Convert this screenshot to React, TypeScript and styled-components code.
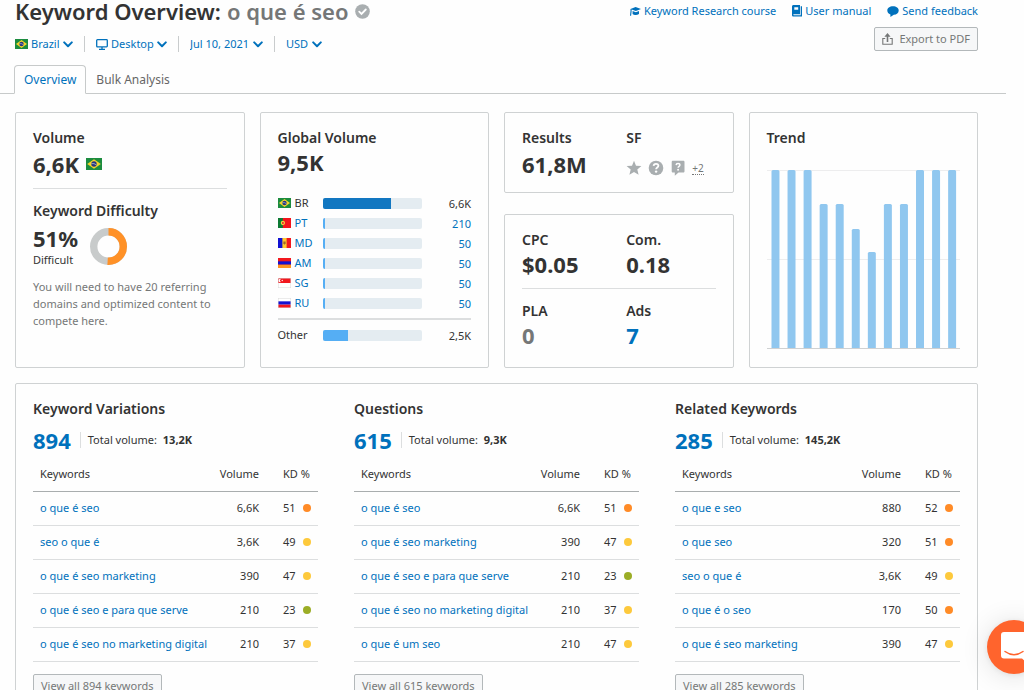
import React from "react";
import styled, { createGlobalStyle } from "styled-components";

const color = {
  text: "#333333",
  muted: "#757777",
  link: "#0071bc",
  border: "#cfd2d3",
  line: "#dcdedf",
  icon: "#a9aeb0",
};

const GlobalStyle = createGlobalStyle`
  *, *::before, *::after { box-sizing: border-box; }
  body {
    margin: 0;
    background: #fefefe;
    color: ${color.text};
    font-family: "Noto Sans", "Open Sans", sans-serif;
    font-size: 11px;
    line-height: 16px;
    overflow-x: hidden;
  }
  h1, h2, p { margin: 0; padding: 0; }
  button, select { font: inherit; }
  a { color: ${color.link}; text-decoration: none; }
  svg { display: block; flex: none; }
`;

const Page = styled.div`
  padding: 0 46px 24px 15px;
`;

const Header = styled.header`
  display: flex;
  justify-content: space-between;
  align-items: flex-start;
`;

const Title = styled.h1`
  display: flex;
  align-items: center;
  gap: 6px;
  font-size: 22px;
  line-height: 22px;
  font-weight: 600;
  white-space: nowrap;
`;

const Query = styled.span`
  color: ${color.muted};
`;

const Filters = styled.div`
  display: flex;
  align-items: center;
  margin-top: 14px;
`;

const Filter = styled.label`
  display: flex;
  align-items: center;
  gap: 3px;
  color: ${color.link};
  & + & {
    margin-left: 11px;
    padding-left: 11px;
    border-left: 1px solid #c9cccd;
  }
`;

const FilterSelect = styled.select`
  appearance: none;
  border: 0;
  margin: 0 -14px 0 0;
  padding: 0 14px 0 0;
  background: transparent;
  color: inherit;
  line-height: 16px;
  cursor: pointer;
`;

const Aside = styled.div`
  display: flex;
  flex-direction: column;
  align-items: flex-end;
  gap: 8px;
  padding-top: 3px;
`;

const HelpLinks = styled.nav`
  display: flex;
  gap: 16px;
`;

const HelpLink = styled.a`
  display: flex;
  align-items: center;
  gap: 3px;
`;

const Button = styled.button`
  display: inline-flex;
  align-items: center;
  gap: 6px;
  height: 24px;
  padding: 0 7px;
  border: 1px solid #b3b8ba;
  border-radius: 2px;
  background: #f6f7f8;
  color: ${color.muted};
  white-space: nowrap;
`;

const Tabs = styled.div`
  display: flex;
  height: 29px;
  margin: 13px -28px 0 -15px;
  padding-left: 14px;
  border-bottom: 1px solid #c7caca;
`;

const Tab = styled.button<{ $active?: boolean }>`
  margin: 0 0 -1px;
  padding: 0 9px;
  border: 1px solid ${(p) => (p.$active ? "#c7caca" : "transparent")};
  border-bottom-color: ${(p) => (p.$active ? "#fefefe" : "transparent")};
  border-radius: 4px 4px 0 0;
  background: ${(p) => (p.$active ? "#fefefe" : "transparent")};
  color: ${(p) => (p.$active ? color.link : "#666666")};
  font-size: 12px;
`;

const Metrics = styled.main`
  display: grid;
  grid-template-columns: repeat(4, minmax(0, 1fr));
  gap: 15px;
  margin-top: 18px;
`;

const Card = styled.section<{ $compact?: boolean }>`
  border: 1px solid ${color.border};
  border-radius: 2px;
  padding: 15px 17px ${(p) => (p.$compact ? 14 : 17)}px;
`;

const Stack = styled.div`
  display: flex;
  flex-direction: column;
  gap: 21px;
  & > :last-child { flex: 1; }
`;

const CardTitle = styled.h2`
  font-size: 14px;
  line-height: 20px;
  font-weight: 600;
  white-space: nowrap;
`;

const Figure = styled.div<{ $tone?: string; $loose?: boolean }>`
  display: flex;
  align-items: center;
  gap: 7px;
  margin-top: ${(p) => (p.$loose ? 3 : 1)}px;
  font-size: 22px;
  line-height: 26px;
  font-weight: 700;
  color: ${(p) => p.$tone || "inherit"};
`;

const Rule = styled.hr`
  margin: 11px 0 12px;
  border: 0;
  border-top: 1px solid ${color.line};
`;

const Difficulty = styled.div`
  display: flex;
  align-items: center;
  gap: 12px;
  margin-top: 3px;
`;

const Percent = styled.div`
  font-size: 22px;
  line-height: 28px;
  font-weight: 700;
`;

const Hint = styled.p`
  margin-top: 10px;
  color: ${color.muted};
  line-height: 17px;
`;

const Countries = styled.div`
  margin-top: 18px;
`;

const CountryRow = styled.div<{ $total?: boolean }>`
  display: grid;
  grid-template-columns: 45px 1fr 49px;
  align-items: center;
  height: 20px;
  ${(p) => p.$total && `height: 32px; margin-top: 5px; border-top: 2px solid ${color.line};`}
`;

const Country = styled.span`
  display: flex;
  align-items: center;
  gap: 4px;
`;

const Track = styled.div`
  height: 11px;
  border-radius: 2px;
  background: #e4ecf1;
  overflow: hidden;
`;

const Fill = styled.div<{ $strong?: boolean }>`
  height: 100%;
  background: ${(p) => (p.$strong ? "#1277c1" : "#55aef4")};
`;

const Amount = styled.span`
  padding-top: 1px;
  text-align: right;
`;

const Pair = styled.div`
  display: grid;
  grid-template-columns: 7fr 6fr;
`;

const Features = styled.div`
  display: flex;
  align-items: center;
  gap: 6px;
  height: 20px;
  margin-top: 10px;
  color: ${color.icon};
`;

const More = styled.a`
  border-bottom: 1px dotted ${color.muted};
  color: ${color.muted};
  font-size: 10px;
  line-height: 12px;
`;

const Chart = styled.svg`
  width: 100%;
  height: 180px;
  margin-top: 22px;
`;

const Ideas = styled.section`
  display: grid;
  grid-template-columns: repeat(3, minmax(0, 1fr));
  gap: 36px;
  margin-top: 15px;
  padding: 15px 17px 17px;
  border: 1px solid ${color.border};
  border-radius: 2px;
`;

const Summary = styled.div`
  display: flex;
  align-items: center;
  margin-top: 8px;
`;

const Count = styled.a`
  font-size: 22px;
  line-height: 26px;
  font-weight: 700;
`;

const Total = styled.span`
  margin-left: 9px;
  padding-left: 7px;
  border-left: 1px solid ${color.line};
  white-space: nowrap;
  b { margin-left: 3px; }
`;

const Table = styled.table`
  width: 100%;
  margin: 5px 0 12px;
  border-collapse: collapse;
  table-layout: fixed;
  th, td {
    height: 34px;
    padding: 0 0 0 7px;
    font-weight: 400;
    text-align: left;
    white-space: nowrap;
    border-bottom: 1px solid ${color.line};
  }
  th { height: 33px; border-bottom-color: #a9adae; }
  th:nth-child(2), td:nth-child(2) { width: 50px; padding: 0; text-align: right; }
  th:nth-child(3), td:nth-child(3) { width: 59px; padding-left: 24px; }
`;

const Score = styled.span<{ $dot: string }>`
  display: flex;
  align-items: center;
  gap: 7px;
  &::after {
    content: "";
    width: 8px;
    height: 8px;
    border-radius: 50%;
    background: ${(p) => p.$dot};
  }
`;

const ChatButton = styled.button`
  position: fixed;
  right: -17px;
  bottom: 16px;
  width: 54px;
  height: 54px;
  padding: 0;
  border: 0;
  border-radius: 50%;
  background: #ff642d;
  box-shadow: 0 1px 6px rgba(0, 0, 0, 0.08), 0 2px 28px rgba(0, 0, 0, 0.12);
`;

const Chevron = () => (
  <svg width="10" height="7" viewBox="0 0 10 7" fill="none" stroke="currentColor" strokeWidth="2" strokeLinecap="round" strokeLinejoin="round" pointerEvents="none">
    <path d="M1.2 1.4 5 5.2l3.8-3.8" />
  </svg>
);

const Verified = () => (
  <svg width="15" height="15" viewBox="0 0 15 15">
    <circle cx="7.5" cy="7.5" r="7.3" fill="#a9aeb0" />
    <path d="m4.2 7.6 2.3 2.3 4.3-4.4" fill="none" stroke="#fff" strokeWidth="1.8" strokeLinecap="round" />
  </svg>
);

const Monitor = () => (
  <svg width="12" height="11" viewBox="0 0 12 11" fill="none" stroke="currentColor">
    <rect x="0.7" y="0.7" width="10.6" height="7.2" rx="0.8" strokeWidth="1.3" />
    <path d="M6 8v2M3 10.3h6" strokeWidth="1.3" />
  </svg>
);

const Cap = () => (
  <svg width="11" height="11" viewBox="0 0 11 11" fill="currentColor">
    <path d="M5.6 1 11 2.9 5.9 5 1.6 3.6v1.6L1.1 9.8H0l.5-4.7V3z" />
    <path d="M2.6 5.1 5.9 6.2 9 5v3.1c-1 .7-2.2 1-3.2 1-1.2 0-2.4-.3-3.2-1z" />
  </svg>
);

const Book = () => (
  <svg width="10" height="12" viewBox="0 0 10 12" fill="currentColor">
    <path fillRule="evenodd" d="M1.5 0H8v9.200H1.800c-.7 0-.7 1 0 1h6.900V1.200H10V11.500H1.500C.6 11.500 0 11 0 10V1.500C0 .6.6 0 1.500 0zM2.300 2.200v2.600h3.900V2.200z" />
  </svg>
);

const Bubble = () => (
  <svg width="12" height="11" viewBox="0 0 12 11" fill="currentColor">
    <path d="M6 .3c3.300 0 5.700 1.800 5.700 4.200S9.600 8.700 6.800 8.800L3.400 11V8.400C1.500 7.800.3 6.300.3 4.500.3 2.100 2.700.3 6 .3z" />
  </svg>
);

const Share = () => (
  <svg width="11" height="12" viewBox="0 0 11 12" fill="none" stroke="currentColor">
    <path d="M3.200 5.500H.8v5.700h9.400V5.500H7.800" strokeWidth="1.100" />
    <path d="M5.500 9V2" strokeWidth="1.600" />
    <path d="M5.500 0 8.600 3.700H2.400z" fill="currentColor" stroke="none" />
  </svg>
);

const Star = () => (
  <svg width="16" height="16" viewBox="0 0 16 16" fill="currentColor">
    <path d="m8 .8 2 4.900 5.400.4-4.100 3.500 1.300 5.200L8 12l-4.600 2.800 1.300-5.200L.6 6.100 6 5.700z" />
  </svg>
);

const QuestionMark = () => (
  <>
    <path d="M5.600 5.900c.1-1.400 1.100-2.100 2.400-2.100 1.400 0 2.400.8 2.400 2 0 1.700-2.300 1.800-2.300 3.500" fill="none" stroke="#fff" strokeWidth="1.800" />
    <circle cx="8.100" cy="11.600" r="1.200" fill="#fff" />
  </>
);

const QuestionCircle = () => (
  <svg width="16" height="16" viewBox="0 0 16 16">
    <circle cx="8" cy="8" r="7.300" fill="currentColor" />
    <QuestionMark />
  </svg>
);

const QuestionBubble = () => (
  <svg width="16" height="16" viewBox="0 0 16 16">
    <path d="M3 .8h10.200c.8 0 1.300.5 1.300 1.300v9.200c0 .8-.5 1.300-1.300 1.300H8.500L4.800 15.700v-3.100H3c-.8 0-1.300-.5-1.300-1.300V2.100C1.700 1.300 2.200.8 3 .8z" fill="currentColor" />
    <g transform="translate(1.600 .4) scale(.8)">
      <QuestionMark />
    </g>
  </svg>
);

const Donut = () => (
  <svg width="37" height="37" viewBox="0 0 37 37" fill="none" strokeWidth="7.400">
    <circle cx="18.500" cy="18.500" r="14.800" stroke="#c8cbcb" />
    <circle cx="18.500" cy="18.500" r="14.800" stroke="#ff9127" pathLength="100" strokeDasharray="51 49" transform="rotate(-90 18.500 18.500)" />
  </svg>
);

const flagArt: Record<string, React.ReactNode> = {
  BR: (
    <>
      <rect width="16" height="12" fill="#1c8c3f" />
      <path d="M8 1.300 14.800 6 8 10.700 1.200 6z" fill="#f5d32b" />
      <circle cx="8" cy="6" r="2.700" fill="#27357f" />
      <path d="M5.500 5.600q2.700-.6 4.900 1.300" stroke="#c9d6d8" strokeWidth=".7" fill="none" />
    </>
  ),
  PT: (
    <>
      <rect width="16" height="12" fill="#f4141c" />
      <rect width="6" height="12" fill="#0d7a33" />
      <circle cx="6" cy="6" r="2.600" fill="#f4dd3c" />
      <rect x="4.900" y="4.700" width="2.200" height="2.600" fill="#e9382f" />
    </>
  ),
  MD: (
    <>
      <rect width="16" height="12" fill="#fdc72e" />
      <rect width="5.400" height="12" fill="#1212d2" />
      <rect x="10.600" width="5.400" height="12" fill="#f2181e" />
      <path d="M6.600 4.300h2.800v2.400L8 8.200 6.600 6.700z" fill="#9c6a28" />
    </>
  ),
  AM: (
    <>
      <rect width="16" height="12" fill="#f2181e" />
      <rect y="4" width="16" height="4" fill="#1212d2" />
      <rect y="8" width="16" height="4" fill="#ff9420" />
    </>
  ),
  SG: (
    <>
      <rect width="16" height="12" fill="#ffffff" />
      <rect width="16" height="6" fill="#f2181e" />
      <path d="M3.400 1.200a2 2 0 1 0 0 3.700 2.400 2.400 0 0 1 0-3.700z" fill="#fff" />
      <circle cx="5.200" cy="3" r=".8" fill="#fff" />
      <rect x=".3" y=".3" width="15.400" height="11.400" fill="none" stroke="#d8d8d8" strokeWidth=".6" />
    </>
  ),
  RU: (
    <>
      <rect width="16" height="12" fill="#ffffff" />
      <rect y="4" width="16" height="4" fill="#1212d2" />
      <rect y="8" width="16" height="4" fill="#f2181e" />
      <rect x=".3" y=".3" width="15.400" height="11.400" fill="none" stroke="#d8d8d8" strokeWidth=".6" />
    </>
  ),
};

const Flag = ({ code, width = 13 }: { code: string; width?: number }) => (
  <svg width={width} height={Math.round(width * 0.75)} viewBox="0 0 16 12" preserveAspectRatio="none">
    {flagArt[code]}
  </svg>
);

const countries = [
  { code: "BR", amount: "6,6K", share: 69 },
  { code: "PT", amount: "210", share: 3 },
  { code: "MD", amount: "50", share: 3 },
  { code: "AM", amount: "50", share: 3 },
  { code: "SG", amount: "50", share: 3 },
  { code: "RU", amount: "50", share: 3 },
];

const trend = [178, 178, 178, 144, 144, 119, 96, 144, 144, 178, 178, 178];

type Idea = [string, string, number];

const ideas: { title: string; count: number; total: string; rows: Idea[] }[] = [
  {
    title: "Keyword Variations",
    count: 894,
    total: "13,2K",
    rows: [
      ["o que é seo", "6,6K", 51],
      ["seo o que é", "3,6K", 49],
      ["o que é seo marketing", "390", 47],
      ["o que é seo e para que serve", "210", 23],
      ["o que é seo no marketing digital", "210", 37],
    ],
  },
  {
    title: "Questions",
    count: 615,
    total: "9,3K",
    rows: [
      ["o que é seo", "6,6K", 51],
      ["o que é seo marketing", "390", 47],
      ["o que é seo e para que serve", "210", 23],
      ["o que é seo no marketing digital", "210", 37],
      ["o que é um seo", "210", 47],
    ],
  },
  {
    title: "Related Keywords",
    count: 285,
    total: "145,2K",
    rows: [
      ["o que e seo", "880", 52],
      ["o que seo", "320", 51],
      ["seo o que é", "3,6K", 49],
      ["o que é o seo", "170", 50],
      ["o que é seo marketing", "390", 47],
    ],
  },
];

const scoreColor = (kd: number) => (kd >= 50 ? "#ff8b27" : kd >= 30 ? "#fdc93c" : "#9bad26");

const filters = [
  { name: "Country", value: "Brazil", icon: <Flag code="BR" /> },
  { name: "Device", value: "Desktop", icon: <Monitor /> },
  { name: "Date", value: "Jul 10, 2021", icon: null },
  { name: "Currency", value: "USD", icon: null },
];

export default function App() {
  return (
    <>
      <GlobalStyle />
      <Page>
        <Header>
          <div>
            <Title>
              Keyword Overview: <Query>o que é seo</Query>
              <Verified />
            </Title>
            <Filters>
              {filters.map((f) => (
                <Filter key={f.name}>
                  {f.icon}
                  <FilterSelect aria-label={f.name}>
                    <option>{f.value}</option>
                  </FilterSelect>
                  <Chevron />
                </Filter>
              ))}
            </Filters>
          </div>
          <Aside>
            <HelpLinks>
              <HelpLink href="#course"><Cap />Keyword Research course</HelpLink>
              <HelpLink href="#manual"><Book />User manual</HelpLink>
              <HelpLink href="#feedback"><Bubble />Send feedback</HelpLink>
            </HelpLinks>
            <Button type="button"><Share />Export to PDF</Button>
          </Aside>
        </Header>

        <Tabs role="tablist">
          <Tab type="button" role="tab" aria-selected $active>Overview</Tab>
          <Tab type="button" role="tab" aria-selected={false}>Bulk Analysis</Tab>
        </Tabs>

        <Metrics>
          <Card>
            <CardTitle>Volume</CardTitle>
            <Figure $loose>6,6K <Flag code="BR" width={16} /></Figure>
            <Rule />
            <CardTitle>Keyword Difficulty</CardTitle>
            <Difficulty>
              <div>
                <Percent>51%</Percent>
                <div>Difficult</div>
              </div>
              <Donut />
            </Difficulty>
            <Hint>You will need to have 20 referring domains and optimized content to compete here.</Hint>
          </Card>

          <Card>
            <CardTitle>Global Volume</CardTitle>
            <Figure>9,5K</Figure>
            <Countries>
              {countries.map((c, i) => (
                <CountryRow key={c.code}>
                  <Country>
                    <Flag code={c.code} />
                    {i === 0 ? c.code : <a href={`#${c.code}`}>{c.code}</a>}
                  </Country>
                  <Track><Fill $strong={i === 0} style={{ width: `${c.share}%` }} /></Track>
                  <Amount>{i === 0 ? c.amount : <a href={`#${c.code}`}>{c.amount}</a>}</Amount>
                </CountryRow>
              ))}
              <CountryRow $total>
                <span>Other</span>
                <Track><Fill style={{ width: "26%" }} /></Track>
                <Amount>2,5K</Amount>
              </CountryRow>
            </Countries>
          </Card>

          <Stack>
            <Card $compact>
              <Pair>
                <div>
                  <CardTitle>Results</CardTitle>
                  <Figure $loose>61,8M</Figure>
                </div>
                <div>
                  <CardTitle>SF</CardTitle>
                  <Features>
                    <Star />
                    <QuestionCircle />
                    <QuestionBubble />
                    <More href="#features">+2</More>
                  </Features>
                </div>
              </Pair>
            </Card>
            <Card>
              <Pair>
                <div>
                  <CardTitle>CPC</CardTitle>
                  <Figure>$0.05</Figure>
                </div>
                <div>
                  <CardTitle>Com.</CardTitle>
                  <Figure>0.18</Figure>
                </div>
              </Pair>
              <Rule />
              <Pair>
                <div>
                  <CardTitle>PLA</CardTitle>
                  <Figure $tone={color.muted}>0</Figure>
                </div>
                <div>
                  <CardTitle>Ads</CardTitle>
                  <Figure><a href="#ads">7</a></Figure>
                </div>
              </Pair>
            </Card>
          </Stack>

          <Card>
            <CardTitle>Trend</CardTitle>
            <Chart viewBox="0 0 194 180" preserveAspectRatio="none" role="img" aria-label="Search volume trend">
              <path d="M0 .5h194M0 89.500h194" stroke="#ededee" />
              {trend.map((h, i) => (
                <path
                  key={i}
                  fill="#90c7ef"
                  d={`M${4.5 + i * 16.1} 178V${179.5 - h}q0-1.500 1.500-1.500h5q1.500 0 1.500 1.500V178z`}
                />
              ))}
              <path d="M0 178.500h194" stroke="#cfd1d2" />
            </Chart>
          </Card>
        </Metrics>

        <Ideas>
          {ideas.map((group) => (
            <div key={group.title}>
              <CardTitle>{group.title}</CardTitle>
              <Summary>
                <Count href="#all">{group.count}</Count>
                <Total>Total volume: <b>{group.total}</b></Total>
              </Summary>
              <Table>
                <thead>
                  <tr><th>Keywords</th><th>Volume</th><th>KD %</th></tr>
                </thead>
                <tbody>
                  {group.rows.map(([keyword, volume, kd]) => (
                    <tr key={keyword}>
                      <td><a href="#keyword">{keyword}</a></td>
                      <td>{volume}</td>
                      <td><Score $dot={scoreColor(kd)}>{kd}</Score></td>
                    </tr>
                  ))}
                </tbody>
              </Table>
              <Button type="button">View all {group.count} keywords</Button>
            </div>
          ))}
        </Ideas>
      </Page>
      <ChatButton type="button" aria-label="Open chat">
        <svg width="54" height="54" viewBox="0 0 54 54">
          <path d="M17 12h20a3 3 0 0 1 3 3v28l-5-4.500H17a3 3 0 0 1-3-3V15a3 3 0 0 1 3-3z" fill="#fff" />
          <path d="M18 31.500q9 6.500 18 0" fill="none" stroke="#ff642d" strokeWidth="1.500" strokeLinecap="round" />
        </svg>
      </ChatButton>
    </>
  );
}
